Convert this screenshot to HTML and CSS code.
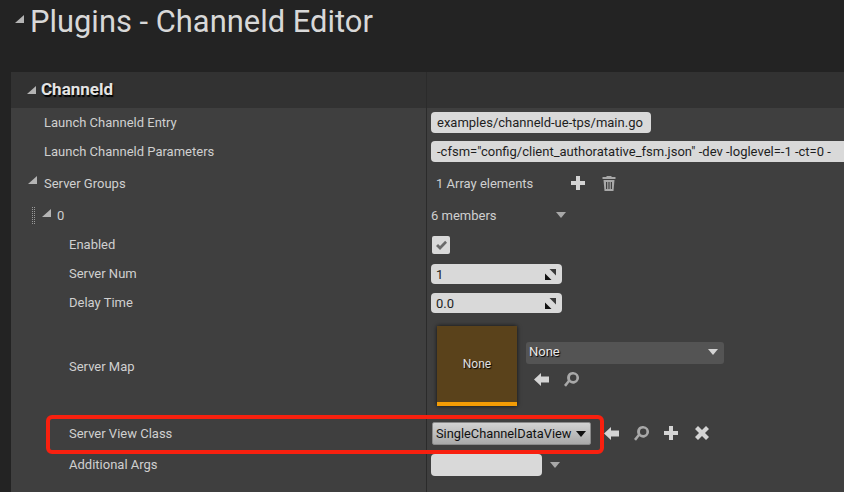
FILE: index.html
```html
<!DOCTYPE html>
<html lang="en">
  <head>
    <meta charset="UTF-8" />
    <title>Plugins - Channeld Editor</title>
    <link rel="stylesheet" href="styles.css">
  </head>
  <body>
    <div class="page-title">
      <svg class="tri tri-title" viewBox="0 0 9 8"><path d="M9 0V8H0Z" /></svg>
      <h1>Plugins - Channeld Editor</h1>
    </div>

    <div class="panel">
      <div class="section-head">
        <div class="name-col">
          <svg class="tri tri-section" viewBox="0 0 9 8"><path d="M9 0V8H0Z" /></svg>
          <span class="section-title">Channeld</span>
        </div>
        <div class="value-col"></div>
      </div>

      <div class="row row-29">
        <div class="name-col indent-1">Launch Channeld Entry</div>
        <div class="value-col"><div class="text-input entry-input">examples/channeld-ue-tps/main.go</div></div>
      </div>
      <div class="row row-29">
        <div class="name-col indent-1">Launch Channeld Parameters</div>
        <div class="value-col"><div class="text-input params-input">-cfsm="config/client_authoratative_fsm.json" -dev -loglevel=-1 -ct=0 -</div></div>
      </div>
      <div class="row row-34">
        <div class="name-col indent-1">
          <svg class="tri tri-row" viewBox="0 0 9 8"><path d="M9 0V8H0Z" /></svg>
          Server Groups
        </div>
        <div class="value-col array-value">
          <span class="array-count">1 Array elements</span>
          <svg class="icon icon-add" viewBox="0 0 14 14"><path d="M5 0H9V5H14V9H9V14H5V9H0V5H5Z" /></svg>
          <svg class="icon icon-trash" viewBox="0 0 14 15"><path d="M5 0H9L10 1H13.5V3H.5V1H4ZM1.5 4H12.5L11.5 15H2.5ZM4 6V13H5.2V6ZM6.4 6V13H7.6V6ZM8.8 6V13H10V6Z" fill-rule="evenodd" /></svg>
        </div>
      </div>
      <div class="row row-30">
        <div class="name-col group-name">
          <span class="grip"></span>
          <svg class="tri tri-row" viewBox="0 0 9 8"><path d="M9 0V8H0Z" /></svg>
          <span>0</span>
        </div>
        <div class="value-col members-value">
          <span class="members-count">6 members</span>
          <svg class="caret" viewBox="0 0 10 6"><path d="M0 0H10L5 6Z" /></svg>
        </div>
      </div>
      <div class="row row-29">
        <div class="name-col indent-2">Enabled</div>
        <div class="value-col">
          <div class="checkbox">
            <svg viewBox="0 0 14 12"><path d="M1 6.5L3.2 4.3L5.4 6.5L11 .8L13 3L5.4 11Z" /></svg>
          </div>
        </div>
      </div>
      <div class="row row-29">
        <div class="name-col indent-2">Server Num</div>
        <div class="value-col">
          <div class="num-input"><span>1</span>
            <svg class="spin" viewBox="0 0 11 11"><path d="M4.5 0H11V6.5Z" fill="#3a3a3a" /><path d="M0 4.5L6.5 11H0Z" /></svg>
          </div>
        </div>
      </div>
      <div class="row row-29">
        <div class="name-col indent-2">Delay Time</div>
        <div class="value-col">
          <div class="num-input"><span>0.0</span>
            <svg class="spin" viewBox="0 0 11 11"><path d="M4.5 0H11V6.5Z" fill="#3a3a3a" /><path d="M0 4.5L6.5 11H0Z" /></svg>
          </div>
        </div>
      </div>
      <div class="row row-98">
        <div class="name-col indent-2">Server Map</div>
        <div class="value-col map-value">
          <div class="thumb"><span>None</span></div>
          <div class="map-side">
            <div class="combo"><span>None</span>
              <svg class="caret" viewBox="0 0 10 6"><path d="M0 0H10L5 6Z" /></svg>
            </div>
            <div class="icon-row">
              <svg class="icon icon-back" viewBox="0 0 15 13"><path d="M7 0V3.5H15V9.5H7V13L0 6.5Z" /></svg>
              <svg class="icon icon-find" viewBox="0 0 15 15"><path d="M9.2 0A5.8 5.8 0 1 1 5.4 10.2L2 14.8L0 13L3.7 8.4A5.8 5.8 0 0 1 9.2 0ZM9.2 2.6A3.2 3.2 0 1 0 9.2 9A3.2 3.2 0 1 0 9.2 2.6Z" fill-rule="evenodd" /></svg>
            </div>
          </div>
        </div>
      </div>
      <div class="row row-36">
        <div class="name-col indent-2">Server View Class</div>
        <div class="value-col class-value">
          <div class="class-button"><span>SingleChannelDataView</span>
            <svg class="caret" viewBox="0 0 10 6"><path d="M0 0H10L5 6Z" /></svg>
          </div>
          <svg class="icon icon-back" viewBox="0 0 15 13"><path d="M7 0V3.5H15V9.5H7V13L0 6.5Z" /></svg>
          <svg class="icon icon-find" viewBox="0 0 15 15"><path d="M9.2 0A5.8 5.8 0 1 1 5.4 10.2L2 14.8L0 13L3.7 8.4A5.8 5.8 0 0 1 9.2 0ZM9.2 2.6A3.2 3.2 0 1 0 9.2 9A3.2 3.2 0 1 0 9.2 2.6Z" fill-rule="evenodd" /></svg>
          <svg class="icon icon-add" viewBox="0 0 14 14"><path d="M5 0H9V5H14V9H9V14H5V9H0V5H5Z" /></svg>
          <svg class="icon icon-clear" viewBox="0 0 14 14"><path d="M3 0L7 4L11 0L14 3L10 7L14 11L11 14L7 10L3 14L0 11L4 7L0 3Z" /></svg>
        </div>
      </div>
      <div class="row row-27">
        <div class="name-col indent-2">Additional Args</div>
        <div class="value-col args-value">
          <div class="args-input"></div>
          <svg class="caret" viewBox="0 0 10 6"><path d="M0 0H10L5 6Z" /></svg>
        </div>
      </div>
      <div class="row row-rest">
        <div class="name-col"></div>
        <div class="value-col"></div>
      </div>
    </div>

    <!-- annotation drawn over the screenshot -->
    <div class="callout"></div>
  </body>
</html>
```

FILE: styles.css
```css
html, body {
  height: 100%;
}
body {
  margin: 0;
  overflow: hidden;
  position: relative;
  background-color: #232323;
  font-family: Roboto, "Liberation Sans", sans-serif;
  font-size: 13px;
  color: #d0d0d0;
}
.page-title {
  display: flex;
  align-items: center;
  height: 42px;
  padding-left: 15px;
  margin-bottom: 30px;
}
.page-title h1 {
  margin: 0 0 0 6px;
  font-size: 30.9px;
  font-weight: 400;
  color: #d8d8d8;
}
.panel {
  margin-left: 11px;
  background-color: #3f3f3f;
  border-radius: 3px 0 0 0;
}
.section-head,
.row {
  display: flex;
}
.section-head {
  height: 36px;
  background-color: #323232;
}
.name-col {
  width: 415px;
  box-sizing: border-box;
  flex: none;
  display: flex;
  align-items: center;
  position: relative;
}
.value-col {
  flex: 1;
  min-width: 0;
  display: flex;
  align-items: center;
  padding-left: 4px;
  border-left: 1px solid #2b2b2b;
}
.section-title {
  margin: -2px 0 0 5px;
  font-size: 17px;
  font-weight: 700;
  color: #e4e4e4;
  text-shadow: 1px 2px 1px #000;
}
.indent-1 {
  padding-left: 33px;
}
.indent-2 {
  padding-left: 58px;
}
.row-29 { height: 29px; }
.row-34 { height: 34px; }
.row-30 { height: 30px; }
.row-98 { height: 98px; }
.row-36 { height: 36px; }
.row-27 { height: 27px; }
.row-rest { height: 14px; }

.tri {
  fill: #b4b4b4;
  flex: none;
}
.tri-title {
  width: 9px;
  height: 8px;
  margin-top: -4px;
}
.tri-section {
  width: 9px;
  height: 8px;
  margin-left: 16px;
}
.tri-row {
  width: 9px;
  height: 8px;
}
.indent-1 .tri-row {
  position: absolute;
  left: 17px;
  top: 10px;
}
.group-name {
  padding-left: 20px;
}
.group-name .tri-row {
  margin: -4px 6px 0 7px;
}
.grip {
  width: 4px;
  height: 17px;
  background-image: repeating-conic-gradient(#9a9a9a 0 25%, transparent 0 100%);
  background-size: 2px 2px;
}

.text-input {
  height: 21px;
  line-height: 21px;
  padding: 0 6px;
  background-color: #d9d9d9;
  border-radius: 4px;
  color: #1e1e1e;
  white-space: nowrap;
  overflow: hidden;
}
.entry-input {
  width: 208px;
}
.params-input {
  flex: 1;
  border-radius: 4px 0 0 4px;
}
.array-value {
  padding-left: 9px;
}
.array-count {
  width: 135px;
}
.icon {
  fill: #d4d4d4;
  flex: none;
}
.icon-add {
  width: 14px;
  height: 14px;
}
.icon-trash {
  width: 14px;
  height: 15px;
  margin-left: 17px;
  fill: #a8a8a8;
}
.members-value {
  padding-left: 4px;
}
.members-count {
  width: 125px;
}
.caret {
  width: 10px;
  height: 6px;
  fill: #a8a8a8;
  flex: none;
}
.checkbox {
  width: 18px;
  height: 18px;
  margin: 1px 0 0 1px;
  background-color: #d9d9d9;
  border-radius: 2px;
  display: flex;
  align-items: center;
  justify-content: center;
}
.checkbox svg {
  width: 13px;
  height: 11px;
  fill: #6a6a6a;
}
.num-input {
  width: 131px;
  height: 20px;
  margin-top: 1px;
  padding: 0 6px 0 5px;
  box-sizing: border-box;
  background-color: #d9d9d9;
  border-radius: 4px;
  color: #1e1e1e;
  display: flex;
  align-items: center;
  justify-content: space-between;
}
.spin {
  width: 11px;
  height: 11px;
  fill: #111;
}
.map-value {
  padding-left: 10px;
}
.thumb {
  width: 80px;
  height: 80px;
  box-sizing: border-box;
  background-color: #5a421b;
  border-bottom: 4px solid #f39c05;
  box-shadow: 0 0 4px #111;
  color: #e0e0e0;
  text-shadow: 1px 1px 1px #000;
  display: flex;
  align-items: center;
  justify-content: center;
  font-size: 12px;
}
.map-side {
  margin-left: 9px;
  margin-top: -4px;
}
.combo {
  width: 198px;
  height: 22px;
  padding: 0 6px 2px 3px;
  box-sizing: border-box;
  background-color: #545454;
  border-radius: 3px;
  color: #e8e8e8;
  text-shadow: 1px 1px 1px #000;
  display: flex;
  align-items: center;
  justify-content: space-between;
}
.combo .caret {
  fill: #d4d4d4;
}
.icon-row {
  display: flex;
  align-items: center;
  gap: 15px;
  padding: 8px 0 0 8px;
}
.icon-back {
  width: 15px;
  height: 13px;
}
.icon-find {
  width: 15px;
  height: 15px;
  fill: #a8a8a8;
}
.class-value {
  padding-left: 5px;
}
.class-button {
  width: 159px;
  height: 23px;
  margin-top: 1px;
  box-sizing: border-box;
  padding: 0 4px 0 3px;
  background: linear-gradient(#d2d2d2, #a9a9a9);
  border: 1px solid #8a8a8a;
  border-radius: 2px;
  color: #111;
  font-size: 12.8px;
  display: flex;
  align-items: center;
  justify-content: space-between;
}
.class-button .caret {
  fill: #111;
}
.class-value .icon-back {
  margin-left: 13px;
}
.class-value .icon-find {
  margin-left: 15px;
}
.class-value .icon-add {
  margin-left: 15px;
}
.class-value .icon-clear {
  width: 14px;
  height: 14px;
  margin-left: 17px;
}
.args-input {
  width: 111px;
  height: 22px;
  margin-top: 1px;
  background-color: #d9d9d9;
  border-radius: 4px;
}
.args-value .caret {
  margin-left: 8px;
}
.callout {
  position: absolute;
  left: 46px;
  top: 415px;
  width: 558px;
  height: 39px;
  box-sizing: border-box;
  border: 4px solid #f8200f;
  border-radius: 6px;
}
```
